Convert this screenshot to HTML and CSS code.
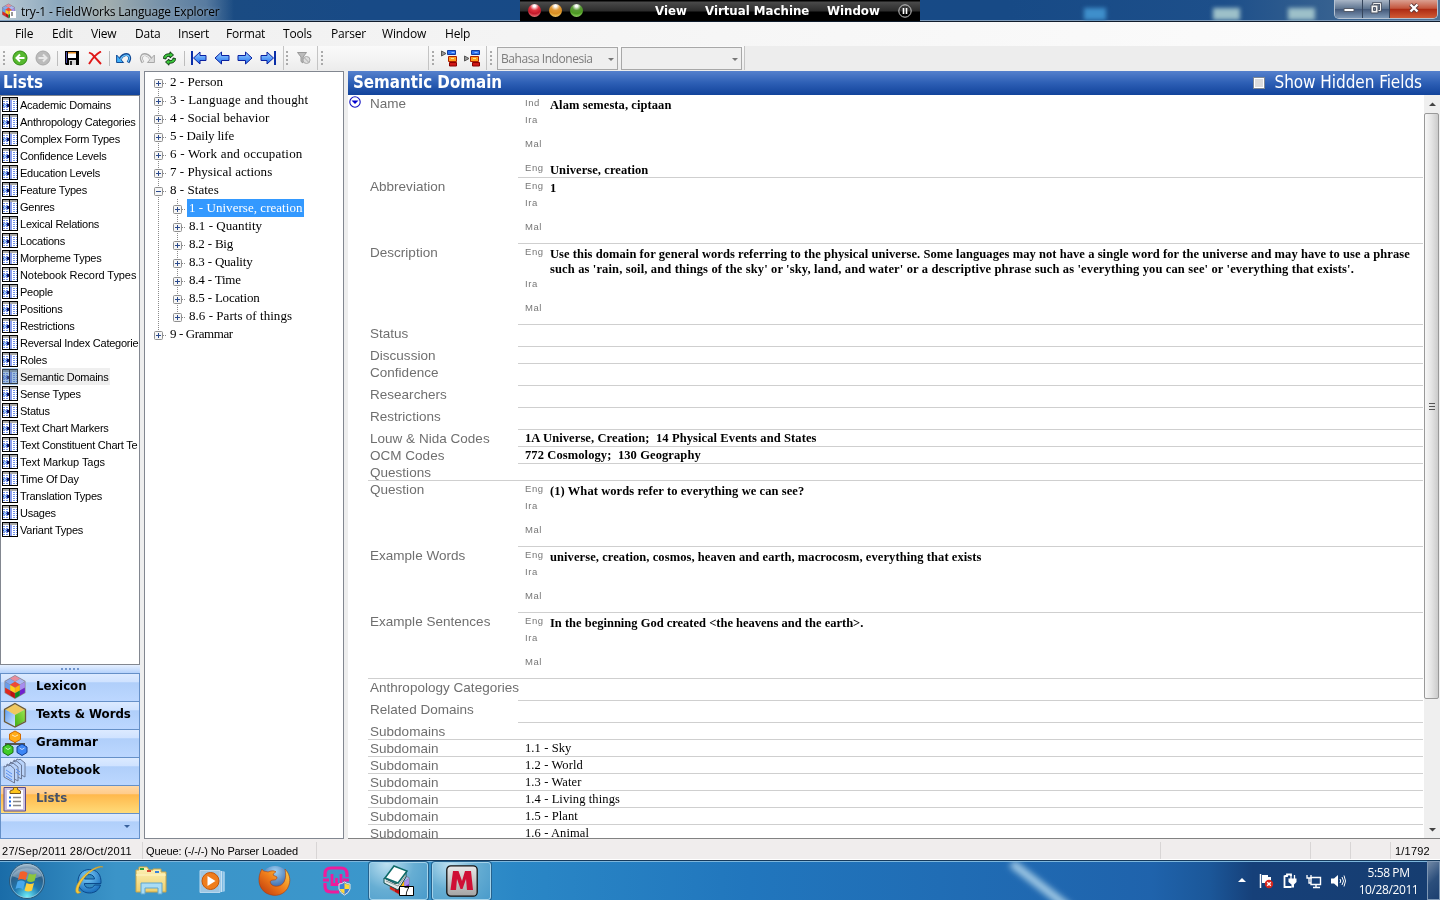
FILE: index.html
```html
<!DOCTYPE html>
<html lang="en">
<head>
<meta charset="utf-8">
<title>try-1 - FieldWorks Language Explorer</title>
<link rel="stylesheet" href="styles.css">
</head>
<body>
<svg class="defs" width="0" height="0">
  <defs>
    <linearGradient id="blueArrow" x1="0" y1="0" x2="0" y2="1"><stop offset="0" stop-color="#9fd4ff"/><stop offset="1" stop-color="#1b6cf0"/></linearGradient>
    <radialGradient id="orb" cx=".5" cy=".95" r=".95"><stop offset="0" stop-color="#6ff0fa"/><stop offset=".4" stop-color="#1f78b0"/><stop offset=".7" stop-color="#2c5f88"/><stop offset="1" stop-color="#b4c6d4"/></radialGradient>
    <radialGradient id="ieBlue" cx=".4" cy=".3" r=".8"><stop offset="0" stop-color="#7fd0fa"/><stop offset="1" stop-color="#0c62b5"/></radialGradient>
    <radialGradient id="foxGlobe" cx=".5" cy=".2" r=".8"><stop offset="0" stop-color="#9fd3f5"/><stop offset="1" stop-color="#133c8c"/></radialGradient>
    <linearGradient id="foxFur" x1="0" y1="1" x2="1" y2="0"><stop offset="0" stop-color="#b8320c"/><stop offset=".5" stop-color="#ef7b1a"/><stop offset="1" stop-color="#ffd84a"/></linearGradient>
    <linearGradient id="folder" x1="0" y1="0" x2="0" y2="1"><stop offset="0" stop-color="#fdf3b8"/><stop offset="1" stop-color="#edcf6d"/></linearGradient>
    <linearGradient id="silver" x1="0" y1="0" x2="0" y2="1"><stop offset="0" stop-color="#e8e8e8"/><stop offset="1" stop-color="#a4a4a4"/></linearGradient>
    <linearGradient id="txtLeft" x1="0" y1="0" x2="1" y2="1"><stop offset="0" stop-color="#5f9df0"/><stop offset="1" stop-color="#d4e8ff"/></linearGradient>
    <linearGradient id="txtRight" x1="0" y1="1" x2="1" y2="0"><stop offset="0" stop-color="#3fae14"/><stop offset="1" stop-color="#9be650"/></linearGradient>
  </defs>
  <symbol id="list" viewBox="0 0 16 15">
    <rect width="16" height="15" fill="#000"/><rect x="1" y="1" width="6" height="13" fill="#fff"/><rect x="8" y="1" width="7" height="13" fill="#fff"/>
    <path d="M1 1h6v2H1zM8 1h7v2H8z" fill="#a8a8a8"/><rect x="8" y="3" width="2" height="11" fill="#8ea0ee"/>
    <path d="M1 4.500h6M1 6.500h6M1 10.500h6M1 12.500h6M11 4.500h4M11 6.500h4M11 8.500h4M11 10.500h4M11 12.500h4" stroke="#6f8fe6" stroke-dasharray="2 1"/>
    <path d="M1 8.500h6" stroke="#1f4fd0" stroke-width="2"/><rect x="2" y="8" width="2" height="1" fill="#9fe0ff"/><rect x="5" y="7" width="2" height="3" fill="#101c70"/>
  </symbol>
  <symbol id="box" viewBox="0 0 9 9"><rect x=".5" y=".5" width="8" height="8" rx="1" fill="#f6f6f6" stroke="#8f8f8f"/><path d="M2 4.500h5" stroke="#2b4a8c"/></symbol>
  <symbol id="plus" viewBox="0 0 16 18"><path d="M8.500 0v18M13 10.500h3" stroke="#8a8a8a" stroke-dasharray="1 1"/><use href="#box" x="4" y="6" width="9" height="9"/><path d="M8.500 8v5" stroke="#2b4a8c"/></symbol>
  <symbol id="minus" viewBox="0 0 16 18"><path d="M8.500 0v18M13 10.500h3" stroke="#8a8a8a" stroke-dasharray="1 1"/><use href="#box" x="4" y="6" width="9" height="9"/></symbol>
  <symbol id="plusLast" viewBox="0 0 16 18"><path d="M8.500 0v7M13 10.500h3" stroke="#8a8a8a" stroke-dasharray="1 1"/><use href="#box" x="4" y="6" width="9" height="9"/><path d="M8.500 8v5" stroke="#2b4a8c"/></symbol>
  <symbol id="plusFirst" viewBox="0 0 16 18"><path d="M8.500 14v4M13 10.500h3" stroke="#8a8a8a" stroke-dasharray="1 1"/><use href="#box" x="4" y="6" width="9" height="9"/><path d="M8.500 8v5" stroke="#2b4a8c"/></symbol>
  <symbol id="guide" viewBox="0 0 19 18"><path d="M8.500 0v18" stroke="#8a8a8a" stroke-dasharray="1 1"/></symbol>
  <symbol id="cube" viewBox="0 0 24 26">
    <path d="M12 1 22.500 7v12L12 25 1.500 19V7z" fill="#8a8490"/>
    <path d="M12 1.800 17 4.600 12 7.500 7 4.600z" fill="#e88d9c"/><path d="M7 4.800l5 2.900L7 10.600 2.200 7.600z" fill="#86a9ee"/><path d="M17 4.800l4.800 2.800L17 10.600l-4.900-2.900z" fill="#a9b7f2"/><path d="M12 7.800l4.900 2.900L12 13.500l-4.900-2.800z" fill="#f04a35"/>
    <path d="M2.200 8l4.900 2.900v5.500L2.200 13.600z" fill="#6a9dea"/><path d="M7.200 11l4.700 2.700v5.400l-4.700-2.700z" fill="#ffd21d"/><path d="M2.200 13.800l4.900 2.700v4.900l-4.900-2.800z" fill="#e0281d"/><path d="M7.200 16.600l4.700 2.700v5l-4.700-2.700z" fill="#c01010"/>
    <path d="M12.100 13.700l4.700-2.800v5.500l-4.700 2.700z" fill="#ffb60a"/><path d="M17 10.800l4.800-2.800v5.600L17 16.300z" fill="#a78cf0"/><path d="M17 16.500l4.800-2.700v4.800L17 21.400z" fill="#6f1fd0"/><path d="M12.100 19.300l4.700-2.700v4.900l-4.700 2.800z" fill="#118a22"/>
  </symbol>
</svg>

<header class="titlebar">
  <div class="app-title">
    <svg width="16" height="16" viewBox="0 0 16 16"><use href="#cube" x="0" y="0" width="15" height="16"/><path d="M9 8h6v7H9z" fill="#fff"/><path d="M11 9v4" stroke="#333"/></svg>
    <span>try-1 - FieldWorks Language Explorer</span>
  </div>
  <i class="glow glow-a"></i><i class="glow glow-b"></i><i class="glow glow-c"></i>
  <div class="win-buttons">
    <b class="wb"><svg width="12" height="10" viewBox="0 0 12 10"><path d="M1 5.500h10v3H1z" fill="#fff" stroke="#555c6a"/></svg></b>
    <b class="wb wb-mid"><svg width="12" height="12" viewBox="0 0 12 12"><path d="M3.500 1.500h7v7h-7z" fill="none" stroke="#4d5463" stroke-width="2.600"/><path d="M3.500 1.500h7v7h-7z" fill="none" stroke="#eee"/><path d="M1 3h7v8H1z" fill="#f2f2f2" stroke="#4d5463"/><path d="M3.500 5.500h2v3h-2z" fill="#7a8598" stroke="#4d5463"/></svg></b>
    <b class="wb wb-close"><svg width="12" height="10" viewBox="0 0 12 10"><path d="M2.500 1.500l7 7M9.500 1.500l-7 7" stroke="#5a3838" stroke-width="4"/><path d="M2.500 1.500l7 7M9.500 1.500l-7 7" stroke="#fff" stroke-width="2.400"/></svg></b>
  </div>
  <div class="vm-bar">
    <i class="lamp red"></i><i class="lamp amber"></i><i class="lamp green"></i>
    <span class="vm-view">View</span><span class="vm-machine">Virtual Machine</span><span class="vm-window">Window</span>
    <svg width="14" height="14" viewBox="0 0 14 14"><circle cx="7" cy="7" r="6.200" fill="none" stroke="#ccc"/><path d="M5.500 4v6M8.500 4v6" stroke="#fff" stroke-width="1.600"/></svg>
  </div>
</header>

<nav class="menu"><span style="width:37px">File</span><span style="width:39px">Edit</span><span style="width:44px">View</span><span style="width:43px">Data</span><span style="width:48px">Insert</span><span style="width:57px">Format</span><span style="width:48px">Tools</span><span style="width:51px">Parser</span><span style="width:63px">Window</span><span>Help</span></nav>

<div class="toolbars">
  <div class="strip strip-main">
    <i class="grip"></i>
    <b class="tool"><svg width="16" height="16" viewBox="0 0 16 16"><circle cx="8" cy="8" r="7" fill="#56b82e" stroke="#2e8a12"/><path d="M12.500 8H5M8 4.500 4.500 8 8 11.500" fill="none" stroke="#fff" stroke-width="2"/></svg></b>
    <b class="tool"><svg width="16" height="16" viewBox="0 0 16 16"><circle cx="8" cy="8" r="7" fill="#bbb" stroke="#a8a8a8"/><path d="M3.500 8H11M8 4.500 11.500 8 8 11.500" fill="none" stroke="#e8e8e8" stroke-width="2"/></svg></b>
    <i class="sep"></i>
    <b class="tool"><svg width="14" height="14" viewBox="0 0 14 14"><path d="M0 0h14v14H1L0 13z" fill="#000"/><path d="M3 1h8v6H3z" fill="#fff"/><path d="M3 1h8v1.500H3z" fill="#e08a20"/><path d="M4 9h7v5H4z" fill="#d5d5d5"/><path d="M5 10h2v4H5z" fill="#222"/><path d="M1 1h1v11H1z" fill="#4848a0"/></svg></b>
    <b class="tool"><svg width="14" height="14" viewBox="0 0 14 14"><path d="M1 1.500 4 3l9 10M13 .5C8 3 4 8 1 13" fill="none" stroke="#e01818" stroke-width="1.900"/></svg></b>
    <i class="sep"></i>
    <b class="tool"><svg width="16" height="14" viewBox="0 0 16 14"><path d="M4 8.500C6 3 12 2 13.500 6c.7 2-.5 4-1.500 5.500" fill="none" stroke="#124a96" stroke-width="3"/><path d="M.6 4v7.500h7z" fill="#3fb0fa" stroke="#124a96"/><path d="M4.500 8.500C6 4 12 2.500 13.300 6c.6 1.800-.4 3.500-1.300 4.800" fill="none" stroke="#6cc8ff" stroke-width="1.200"/></svg></b>
    <b class="tool"><svg width="16" height="14" viewBox="0 0 16 14"><path d="M12 8.500C10 3 4 2 2.500 6c-.7 2 .5 4 1.500 5.500" fill="none" stroke="#a8a8a8" stroke-width="3"/><path d="M15.400 4v7.500h-7z" fill="#ddd" stroke="#a8a8a8"/><path d="M11.500 8.500C10 4 4 2.500 2.700 6c-.6 1.800.4 3.500 1.300 4.800" fill="none" stroke="#ececec" stroke-width="1.200"/></svg></b>
    <b class="tool"><svg width="15" height="15" viewBox="0 0 15 15"><path d="M1.500 7.500C1.500 4 4 2.700 8 2.700V.8L11.500 4 8 7V5.300C5 5.300 4 6 4 8z" fill="#3cc93c" stroke="#042e08" stroke-width=".9"/><path d="M13.500 7.500c0 3.500-2.500 4.800-6.500 4.800v1.900L3.500 11 7 8v1.700c3 0 4-.7 4-2.700z" fill="#3cc93c" stroke="#042e08" stroke-width=".9"/></svg></b>
    <i class="sep"></i>
    <b class="tool"><svg width="16" height="16" viewBox="0 0 16 16"><path d="M1 1v14" stroke="#0a2ea8" stroke-width="2"/><path d="M2.500 8 9 2v3.500h6v5H9V14z" fill="url(#blueArrow)" stroke="#0a20a0"/></svg></b>
    <b class="tool"><svg width="16" height="16" viewBox="0 0 16 16"><path d="M1 8 7.500 2v3.500H15v5H7.500V14z" fill="url(#blueArrow)" stroke="#0a20a0"/></svg></b>
    <b class="tool"><svg width="16" height="16" viewBox="0 0 16 16"><path d="M15 8 8.500 2v3.500H1v5h7.500V14z" fill="url(#blueArrow)" stroke="#0a20a0"/></svg></b>
    <b class="tool"><svg width="16" height="16" viewBox="0 0 16 16"><path d="M15 1v14" stroke="#0a2ea8" stroke-width="2"/><path d="M13.500 8 7 2v3.500H1v5h6V14z" fill="url(#blueArrow)" stroke="#0a20a0"/></svg></b>
  </div>
  <div class="strip strip-filter"><i class="grip"></i><b class="tool"><svg width="14" height="14" viewBox="0 0 14 14"><path d="M.5 1.500h9L6 6v6L4 10.500V6z" fill="#bbb" stroke="#999"/><circle cx="9.500" cy="9" r="3.500" fill="#ddd" stroke="#aaa"/><path d="M7 6.500l5 5" stroke="#aaa"/></svg></b></div>
  <div class="strip strip-blank"><i class="grip"></i></div>
  <div class="strip strip-insert"><i class="grip"></i>
    <b class="tool"><svg width="17" height="17" viewBox="0 0 17 17"><path d="M.5 1v5L5 3.500z" fill="#999" stroke="#555"/><path d="M6.500 .5h8v4h-8z" fill="#2d72f0" stroke="#123a9c"/><path d="M10.500 2.500h3" stroke="#8fc0ff"/><path d="M7.500 6.500h8v5h-8z" fill="#ffa020" stroke="#b02000"/><path d="M10 8.500h3" stroke="#ffe08a"/><path d="M8.500 12.500h7v3.500h-7z" fill="#d01818" stroke="#800"/></svg></b>
    <b class="tool"><svg width="17" height="17" viewBox="0 0 17 17"><path d="M.5 6v5L5 8.500z" fill="#999" stroke="#555"/><path d="M7.500 .5h8v4h-8z" fill="#2d72f0" stroke="#123a9c"/><path d="M10.500 2.500h3" stroke="#8fc0ff"/><path d="M6.500 6.500h8v5h-8z" fill="#ffa020" stroke="#b02000"/><path d="M9 8.500h3" stroke="#ffe08a"/><path d="M8.500 12.500h7v3.500h-7z" fill="#d01818" stroke="#800"/></svg></b>
  </div>
  <div class="strip strip-combos"><i class="grip"></i><div class="combo">Bahasa Indonesia</div><div class="combo"></div></div>
</div>

<main class="work">
  <aside class="side">
    <h1 class="head">Lists</h1>
    <ul class="lists">
      <li><svg><use href="#list"/></svg><span>Academic Domains</span></li>
      <li><svg><use href="#list"/></svg><span>Anthropology Categories</span></li>
      <li><svg><use href="#list"/></svg><span>Complex Form Types</span></li>
      <li><svg><use href="#list"/></svg><span>Confidence Levels</span></li>
      <li><svg><use href="#list"/></svg><span>Education Levels</span></li>
      <li><svg><use href="#list"/></svg><span>Feature Types</span></li>
      <li><svg><use href="#list"/></svg><span>Genres</span></li>
      <li><svg><use href="#list"/></svg><span>Lexical Relations</span></li>
      <li><svg><use href="#list"/></svg><span>Locations</span></li>
      <li><svg><use href="#list"/></svg><span>Morpheme Types</span></li>
      <li class="wide"><svg><use href="#list"/></svg><span>Notebook Record Types</span></li>
      <li><svg><use href="#list"/></svg><span>People</span></li>
      <li><svg><use href="#list"/></svg><span>Positions</span></li>
      <li><svg><use href="#list"/></svg><span>Restrictions</span></li>
      <li><svg><use href="#list"/></svg><span>Reversal Index Categorie</span></li>
      <li><svg><use href="#list"/></svg><span>Roles</span></li>
      <li class="current"><svg><use href="#list"/></svg><span>Semantic Domains</span></li>
      <li><svg><use href="#list"/></svg><span>Sense Types</span></li>
      <li><svg><use href="#list"/></svg><span>Status</span></li>
      <li><svg><use href="#list"/></svg><span>Text Chart Markers</span></li>
      <li><svg><use href="#list"/></svg><span>Text Constituent Chart Te</span></li>
      <li class="wide"><svg><use href="#list"/></svg><span>Text Markup Tags</span></li>
      <li><svg><use href="#list"/></svg><span>Time Of Day</span></li>
      <li><svg><use href="#list"/></svg><span>Translation Types</span></li>
      <li><svg><use href="#list"/></svg><span>Usages</span></li>
      <li><svg><use href="#list"/></svg><span>Variant Types</span></li>
    </ul>
    <div class="splitter"><i></i><i></i><i></i><i></i><i></i></div>
    <div class="areas">
      <div class="area"><svg width="24" height="26"><use href="#cube"/></svg><span>Lexicon</span></div>
      <div class="area"><svg width="24" height="26" viewBox="0 0 24 26"><path d="M12 2 2 7.500 12 13l10-5.500z" fill="#f0c860"/><path d="M2 7.500 12 13v12L2 19z" fill="url(#txtLeft)"/><path d="M22 7.500 12 13v12l10-6z" fill="url(#txtRight)"/><path d="M12 1.500 22.500 7.500v12L12 25 1.500 19.500v-12z" fill="none" stroke="#6b5a36" stroke-width="1.300"/></svg><span>Texts &amp; Words</span></div>
      <div class="area"><svg width="26" height="26" viewBox="0 0 26 26"><path d="M13 9v5M4 17v-3h18v3" fill="none" stroke="#555" stroke-width="2"/><path d="M13 1l5.500 3v5.500L13 12.500 7.500 9.500V4z" fill="#ffab17" stroke="#d06a00"/><path d="M6 14l5 3v5.500l-5 3-5-3V17z" fill="#42cd28" stroke="#187010"/><path d="M20 14l5 3v5.500l-5 3-5-3V17z" fill="#3d86f5" stroke="#103c90"/><path d="M10 5l3 1.500L16 5M3.500 18 6 19.500 8.500 18M17.500 18l2.500 1.500 2.500-1.500" fill="none" stroke="#fff" stroke-opacity=".7"/></svg><span>Grammar</span></div>
      <div class="area"><svg width="24" height="26" viewBox="0 0 24 26"><g fill="#b9d3fa" stroke="#6b7896"><path d="M11 2l2 1 1-2 2 1 1-1 5 4v14l-11-6z"/><path d="M7.500 4l2 1 1-2 2 1 1-1 5 4v14l-11-6z"/><path d="M4 6l2 1 1-2 2 1 1-1 5 4v14L4 17z"/><path d="M1 8l2 1 1-2 2 1 1-1 4.500 4v14L1 19z"/></g><path d="M3 12l6 4M3 15l6 4M3 18l6 4M13 11l4 3M13 14l4 3" stroke="#5a8ff0"/></svg><span>Notebook</span></div>
      <div class="area on"><svg width="24" height="26" viewBox="0 0 24 26"><path d="M1 1.500h21.500V25H1z" fill="#c9bfe0" stroke="#5a4a88"/><path d="M4 4h16v19H4z" fill="#fff"/><path d="M7 7.500h10.500V5l-3-1.500V1.500h-4v2L7 5z" fill="#ffc61d" stroke="#7a5a20"/><path d="M10 11.500h8M10 15.500h8M10 19.500h8" stroke="#888" stroke-width="1.500"/><path d="M6 11.500h2M6 15.500h2M6 19.500h2" stroke="#1f66e0" stroke-width="2"/></svg><span>Lists</span></div>
      <div class="area-foot"><svg width="6" height="4" viewBox="0 0 6 4"><path d="M0 0h6L3 3z" fill="#38619c"/></svg></div>
    </div>
  </aside>

  <section class="tree">
    <div class="node"><svg><use href="#plusFirst"/></svg><span>2 - Person</span></div>
    <div class="node loose"><svg><use href="#plus"/></svg><span>3 - Language and thought</span></div>
    <div class="node"><svg><use href="#plus"/></svg><span>4 - Social behavior</span></div>
    <div class="node tight"><svg><use href="#plus"/></svg><span>5 - Daily life</span></div>
    <div class="node loose"><svg><use href="#plus"/></svg><span>6 - Work and occupation</span></div>
    <div class="node"><svg><use href="#plus"/></svg><span>7 - Physical actions</span></div>
    <div class="node"><svg><use href="#minus"/></svg><span>8 - States</span></div>
    <div class="node"><svg class="rail"><use href="#guide"/></svg><svg><use href="#plus"/></svg><span class="picked">1 - Universe, creation</span></div>
    <div class="node"><svg class="rail"><use href="#guide"/></svg><svg><use href="#plus"/></svg><span>8.1 - Quantity</span></div>
    <div class="node tight"><svg class="rail"><use href="#guide"/></svg><svg><use href="#plus"/></svg><span>8.2 - Big</span></div>
    <div class="node tight"><svg class="rail"><use href="#guide"/></svg><svg><use href="#plus"/></svg><span>8.3 - Quality</span></div>
    <div class="node tight"><svg class="rail"><use href="#guide"/></svg><svg><use href="#plus"/></svg><span>8.4 - Time</span></div>
    <div class="node tight"><svg class="rail"><use href="#guide"/></svg><svg><use href="#plus"/></svg><span>8.5 - Location</span></div>
    <div class="node"><svg class="rail"><use href="#guide"/></svg><svg><use href="#plusLast"/></svg><span>8.6 - Parts of things</span></div>
    <div class="node tighter"><svg><use href="#plusLast"/></svg><span>9 - Grammar</span></div>
  </section>

  <section class="detail">
    <div class="head head-detail"><h2>Semantic Domain</h2><label><i class="check"></i>Show Hidden Fields</label></div>
    <div class="pane">
      <div class="fields">
        <div class="field"><svg class="chev" width="12" height="12" viewBox="0 0 12 12"><circle cx="6" cy="6" r="5.200" fill="#fff" stroke="#1010c0" stroke-width="1.100"/><path d="M2.500 4.500h7L6 8z" fill="#0000d0"/></svg><label>Name</label><div class="val"><p><i>Ind</i><b>Alam semesta, ciptaan</b></p><p class="gap"><i>Ira</i></p><p class="gap"><i>Mal</i></p><p><i>Eng</i><b>Universe, creation</b></p></div></div>
        <div class="field"><label>Abbreviation</label><div class="val"><p><i>Eng</i><b>1</b></p><p class="gap"><i>Ira</i></p><p class="gap"><i>Mal</i></p></div></div>
        <div class="field"><label>Description</label><div class="val"><p class="two"><i>Eng</i><b><span class="line-a">Use this domain for general words referring to the physical universe. Some languages may not have a single word for the universe and may have to use a phrase</span><br><span class="line-b">such as 'rain, soil, and things of the sky' or 'sky, land, and water' or a descriptive phrase such as 'everything you can see' or 'everything that exists'.</span></b></p><p class="gap"><i>Ira</i></p><p class="gap"><i>Mal</i></p></div></div>
        <div class="field tall"><label>Status</label><div class="val"></div></div>
        <div class="field"><label>Discussion</label><div class="val"></div></div>
        <div class="field tall"><label>Confidence</label><div class="val"></div></div>
        <div class="field tall"><label>Researchers</label><div class="val"></div></div>
        <div class="field tall"><label>Restrictions</label><div class="val"></div></div>
        <div class="field"><label>Louw &amp; Nida Codes</label><div class="val plain"><b>1A Universe, Creation;&nbsp; 14 Physical Events and States</b></div></div>
        <div class="field"><label>OCM Codes</label><div class="val plain"><b>772 Cosmology;&nbsp; 130 Geography</b></div></div>
        <div class="field full"><label>Questions</label><div class="val"></div></div>
        <div class="field"><label>Question</label><div class="val"><p><i>Eng</i><b>(1) What words refer to everything we can see?</b></p><p class="gap"><i>Ira</i></p><p class="gap"><i>Mal</i></p></div></div>
        <div class="field"><label>Example Words</label><div class="val"><p><i>Eng</i><b>universe, creation, cosmos, heaven and earth, macrocosm, everything that exists</b></p><p class="gap"><i>Ira</i></p><p class="gap"><i>Mal</i></p></div></div>
        <div class="field full"><label>Example Sentences</label><div class="val"><p><i>Eng</i><b class="even">In the beginning God created &lt;the heavens and the earth&gt;.</b></p><p class="gap"><i>Ira</i></p><p class="gap last"><i>Mal</i></p></div></div>
        <div class="field tall"><label>Anthropology Categories</label><div class="val"></div></div>
        <div class="field tall"><label>Related Domains</label><div class="val"></div></div>
        <div class="field full"><label>Subdomains</label><div class="val"></div></div>
        <div class="field full"><label>Subdomain</label><div class="val plain">1.1 - Sky</div></div>
        <div class="field full"><label>Subdomain</label><div class="val plain">1.2 - World</div></div>
        <div class="field full"><label>Subdomain</label><div class="val plain">1.3 - Water</div></div>
        <div class="field full"><label>Subdomain</label><div class="val plain">1.4 - Living things</div></div>
        <div class="field full"><label>Subdomain</label><div class="val plain">1.5 - Plant</div></div>
        <div class="field full"><label>Subdomain</label><div class="val plain">1.6 - Animal</div></div>
      </div>
      <div class="scroll">
        <svg width="16" height="18" viewBox="0 0 16 18"><path d="M5 11h7L8.500 7.500z" fill="#444"/></svg>
        <div class="thumb"><i></i><i></i><i></i></div>
        <svg width="16" height="17" viewBox="0 0 16 17"><path d="M5 7h7L8.500 10.500z" fill="#444"/></svg>
      </div>
    </div>
  </section>
</main>

<footer class="status"><span class="s1">27/Sep/2011 28/Oct/2011</span><span class="s2">Queue: (-/-/-) No Parser Loaded</span><span class="s3"></span><span class="s4"></span><span class="s5"></span><span class="s6"></span><span class="s7">1/1792</span></footer>

<div class="taskbar">
  <b class="task start"><svg width="38" height="38" viewBox="0 0 38 38"><circle cx="19" cy="19" r="17.500" fill="url(#orb)" stroke="#2c5878" stroke-width="1"/><circle cx="19" cy="19" r="16.500" fill="none" stroke="#a9cbe0" stroke-opacity=".6"/><path d="M4 14a16 12 0 0 1 30 0q-15 7-30 0" fill="#fff" opacity=".3"/><path d="M12 10q4-2 7.500 1l-2 7.500q-3.500-2.500-7.500-.500z" fill="#f2602a"/><path d="M21 11.500q4 2 7.500 0l-2 7.500q-4 2-7.500 0z" fill="#8cc63e"/><path d="M9.500 19.500q4-2 7.500.500l-2 7.500q-3.500-2.500-7.500-.500z" fill="#49a8ec"/><path d="M18.500 21q4 2 7.500 0l-2 7.500q-4 2-7.500 0z" fill="#ffd03c"/></svg></b>
  <b class="task"><svg width="34" height="34" viewBox="0 0 34 34"><path d="M17.500 5.500C10 5.500 6 11 6 17.500 6 24 10.500 29 17.500 29c5.500 0 9.500-3 11-8h-6c-1 2-2.500 3-5 3-3 0-5-1.500-5.200-4.500H29C29.500 10.500 25 5.500 17.500 5.500zM12.500 15c.5-2.500 2.200-4.500 5-4.500s4.800 2 5 4.500z" fill="url(#ieBlue)" stroke="#0b4a8c"/><path d="M31 3C25 0 8 11 4 24c-1 5 1 7 5 4-3 0-3-2-2-5C11 12 24 2 31 3z" fill="#f6c93b" stroke="#c4952a" stroke-width=".6"/></svg></b>
  <b class="task"><svg width="34" height="32" viewBox="0 0 34 32"><path d="M2 5h3V2h8l2 3h4V4h8v3h5v20H2z" fill="url(#folder)" stroke="#c9a548"/><path d="M6 3h4v2H6z" fill="#2aa043"/><path d="M13 5h4v2h-4z" fill="#d8472e"/><path d="M21 6h4v2h-4z" fill="#3a82d8"/><path d="M2 10h30" stroke="#fff6c8"/><path d="M7 29V18h21v11h-4v-6H11v6z" fill="#a9dcf5" stroke="#5fa6cf"/></svg></b>
  <b class="task"><svg width="30" height="30" viewBox="0 0 30 30"><path d="M22 5h4.500v21H22z" fill="#7db9e2"/><path d="M23.500 5v21M26 6v19" stroke="#c5e2f4"/><path d="M2 4.500h20v22H2z" fill="#9fc7e3" stroke="#b8d8ee"/><circle cx="12.500" cy="15" r="8.500" fill="#ef7d1c" stroke="#c65608"/><path d="M9.500 10v10l8-5z" fill="#fff"/></svg></b>
  <b class="task"><svg width="34" height="34" viewBox="0 0 34 34"><circle cx="17" cy="16" r="14" fill="url(#foxGlobe)"/><path d="M4 5c-5 8-4 19 4 24 9 5 20 2 23-8 2-6 0-12-4-16 1 5 1 9-1 13-3 5-9 5-12 3-3-3-2-5 2-5 2 0 3-1 3-3l-4-2c1-2 2-3 3-3-2-2-6-1-8 0-2-1-5 0-6-3z" fill="url(#foxFur)" stroke="#a93a0c" stroke-width=".6"/></svg></b>
  <b class="task"><svg width="30" height="32" viewBox="0 0 30 32"><path d="M3 12V9q0-6 6-6h10q6 0 6 6v3M3 18v3q0 6 6 6h8" fill="none" stroke="#ee1c9c" stroke-width="3.200"/><path d="M1 15h6M21 15h6" stroke="#ee1c9c" stroke-width="3"/><path d="M10 9v10.500h4.500V13m0 6.500H19V9" fill="none" stroke="#ee1c9c" stroke-width="2.800"/><path d="M17 19q3 0 5.500-2 2.500 2 5.500 2v5q-1 4-5.500 6-4.500-2-5.500-6z" fill="#3c7fd8" stroke="#e8e8e8"/><path d="M22.500 18q2 1.500 5 1.500V24h-5zM22.500 24v5q-4-2-5-5z" fill="#ffd83a"/></svg></b>
  <b class="task lit"><svg width="34" height="34" viewBox="0 0 34 34"><use href="#cube" x="4" y="7" width="27" height="25"/><path d="M2 14l12 6 8-13 2 1v5l-8 13-14-7z" fill="#e4eaea" stroke="#0d4f50"/><path d="M12 2 25 7l-9 12L3 14z" fill="#fff" stroke="#0d6a68" stroke-width="1.500"/><path d="M4 17l12 5 8-11" fill="none" stroke="#8a9a9a"/><path d="M17.500 22.500h14v9h-14z" fill="#fff" stroke="#000"/></svg><em>7</em></b>
  <b class="task lit lit-2"><svg width="32" height="32" viewBox="0 0 32 32"><rect x=".8" y=".8" width="30.400" height="30.400" rx="4" fill="url(#silver)" stroke="#111" stroke-width="1.300"/><path d="M7 6h5.500l3.500 10 3-10H25l2 19h-6l-1-11-3.500 10h-2L11 14l-1 11H4.500z" fill="#cf0f35"/></svg></b>
  <i class="streak"></i>
  <div class="tray">
    <svg width="8" height="5" viewBox="0 0 8 5"><path d="M4 0 8 4H0z" fill="#fff"/></svg>
    <svg width="16" height="16" viewBox="0 0 16 16"><path d="M2.500 1v14" stroke="#fff" stroke-width="1.500"/><path d="M4 2h6v2h3v6H4z" fill="#fff"/><circle cx="11" cy="11" r="4.200" fill="#d8251c"/><path d="M9.200 9.200l3.600 3.600M12.800 9.200l-3.600 3.600" stroke="#fff" stroke-width="1.400"/></svg>
    <svg width="16" height="16" viewBox="0 0 16 16"><path d="M2.500 3H5V1.500h4V3M2.500 2.500v11.500h7" fill="none" stroke="#fff" stroke-width="1.800"/><path d="M9 2v4M12.500 2v4" stroke="#fff" stroke-width="1.300"/><path d="M6.500 5.500h8V9l-2.500 2.500v3H9.500v-3L6.500 9z" fill="#fff"/></svg>
    <svg width="16" height="16" viewBox="0 0 16 16"><path d="M5 4.500h9.500v7H5zM7 14.500h7M10 12v2" fill="none" stroke="#fff" stroke-width="1.400"/><path d="M1 2v3h4V2M3 5v5h2" fill="none" stroke="#fff" stroke-width="1.300"/></svg>
    <svg width="16" height="16" viewBox="0 0 16 16"><path d="M1 5.500h3L8 2v12L4 10.500H1z" fill="#fff"/><path d="M10 6q1.500 2 0 4M12 4q3 4 0 8M14 2.500q3 5.500 0 11" fill="none" stroke="#fff"/></svg>
  </div>
  <div class="clock"><span>5:58 PM</span><span>10/28/2011</span></div>
  <i class="peek"></i>
</div>
</body>
</html>
```
FILE: styles.css
```css
* { box-sizing: border-box; }
html, body { margin: 0; height: 100%; }
body { width: 1440px; height: 900px; overflow: hidden; display: flex; flex-direction: column; background: #eee; color: #000; font: 11px/17px "Liberation Sans", sans-serif; }
h1, h2, p, ul { margin: 0; padding: 0; }
i, em, b.tool, b.task { font-style: normal; }
svg { display: block; flex: none; }
.defs { position: absolute; }

.titlebar { position: relative; flex: none; height: 22px; display: flex; justify-content: space-between; overflow: hidden; background: linear-gradient(90deg, #1e4d7c 0, #184a86 25%, #174a86 70%, #1d4f8a 85%, #4f7396 100%); border-bottom: 1px solid #101c2c; box-shadow: inset 0 -1px #7f9cbb; }
.app-title { display: flex; align-items: center; gap: 4px; height: 20px; padding: 2px 14px 0 1px; font: 12px/19px "Open Sans", sans-serif; letter-spacing: -.18px; text-shadow: 0 0 4px rgba(255, 255, 255, .35); background: linear-gradient(90deg, #b9c9d2 0, #8ba7bd 25%, #a3afaf 45%, #7490a9 70%, #587ba0 88%, transparent 100%); }
.glow { position: absolute; filter: blur(2px); top: 8px; width: 27px; height: 12px; background: #9dc0c9; }
.glow-a { left: 1084px; background: #3f8fcb; width: 22px; }
.glow-b { left: 1213px; }
.glow-c { left: 1288px; }
.win-buttons { display: flex; height: 19px; margin-right: 2px; border: 1px solid #b6c3d2; border-top: 0; border-radius: 0 0 5px 5px; overflow: hidden; }
.wb { width: 28px; display: flex; justify-content: center; align-items: center; background: linear-gradient(#a9b6c7, #5e7490 48%, #44597a 52%, #7f98b5); border-right: 1px solid #35455c; padding-bottom: 2px; }
.wb-mid { width: 27px; }
.wb-close { width: 47px; border: 0; background: linear-gradient(#dba091, #c4563d 46%, #ae2c14 52%, #d05a34); }
.vm-bar { position: absolute; left: 520px; top: 0; width: 400px; height: 22px; display: flex; align-items: center; padding: 0 8px; background: linear-gradient(#000 0 1px, #4a4a4a 2px, #2c2c2c 11px, #000 12px); color: #fff; font: bold 13.100px/22px "DejaVu Sans Condensed", "Noto Sans", sans-serif; }
.lamp { width: 13px; height: 13px; border-radius: 50%; margin: 0 8px 1px 0; background: radial-gradient(circle at 50% 15%, #fff 0 8%, #e13540 35%, #c2182a 60%, #ffb0a8); }
.amber { background: radial-gradient(circle at 50% 15%, #fff 0 8%, #e29a36 35%, #d98e22 60%, #ffe98a); }
.green { background: radial-gradient(circle at 50% 15%, #fff 0 8%, #5a9a36 35%, #4c9a22 60%, #b9f08a); }
.vm-view { width: 50px; margin-left: 64px; }
.vm-machine { width: 122px; white-space: nowrap; }
.vm-window { width: 71px; }

.menu { flex: none; height: 24px; display: flex; padding-left: 15px; background: linear-gradient(90deg, #efefef, #f6f6f6 50%, #fcfcfc); font: 12px/24px "Open Sans", sans-serif; letter-spacing: -.2px; }

.toolbars { flex: none; height: 25px; display: flex; background: #ededed; }
.strip { display: flex; align-items: center; height: 24px; border-right: 1px solid #c4c4c4; background: linear-gradient(#fafafa, #f4f4f4 50%, #ececec); }
.strip-main { width: 284px; padding-left: 3px; }
.strip-filter { width: 34px; padding-left: 2px; }
.strip-blank { width: 111px; padding-left: 3px; }
.strip-insert { width: 58px; padding-left: 3px; }
.strip-combos { width: 258px; padding-left: 3px; gap: 3px; }
.grip { flex: none; width: 2px; height: 14px; margin-right: 4px; background: repeating-linear-gradient(#aaa 0 2px, transparent 2px 4px); }
.strip-main .grip { margin-right: 3px; }
.strip-combos .grip { margin-right: 2px; }
.tool { width: 23px; flex: none; display: flex; justify-content: center; }
.sep { width: 1px; height: 15px; margin: 0 2.500px; background: #bdbdbd; }
.combo { position: relative; flex: none; width: 121px; height: 23px; border: 1px solid #a8a8a8; background: #efefef; color: #7b7b7b; padding-left: 3px; font: 12px/21px "Open Sans", sans-serif; letter-spacing: -.45px; }
.combo:first-of-type { letter-spacing: -.45px; }
.combo { letter-spacing: -.25px; }
.combo::after { content: ""; position: absolute; right: 3px; top: 10px; border: 3px solid transparent; border-top-color: #777; border-bottom: 0; }

.work { flex: none; height: 768px; display: flex; }
.head { height: 24px; padding-left: 3px; color: #fff; background: linear-gradient(#5681cd, #2d5fb5 50%, #12439b); font: bold 16.800px/23px "DejaVu Sans Condensed", "Noto Sans", sans-serif; }
.side { width: 140px; display: flex; flex-direction: column; }
.lists { height: 570px; list-style: none; border: 1px solid #828790; padding-right: 1px; overflow: hidden; background: #fff; white-space: nowrap; }
.lists li { height: 17px; display: flex; align-items: center; padding-left: 1px; letter-spacing: -.24px; }
.lists .wide { letter-spacing: -.07px; }
.lists svg { width: 16px; height: 15px; }
.lists span { padding: 0 2px; height: 17px; line-height: 18px; }
.current { background: linear-gradient(#a9c9ea, #a9c9ea) 1px 0 / 16px 17px no-repeat; }
.current span { background: #efefef; }
.current svg { opacity: .99; mix-blend-mode: multiply; background: none; }
.lists .current svg { filter: brightness(.92) drop-shadow(0 0 0 #3399ff); opacity: .72; }
.splitter { height: 8px; display: flex; justify-content: center; gap: 2px; padding-top: 3px; background: linear-gradient(#e6f0ff, #b5d2fb); }
.splitter i { width: 2px; height: 2px; background: #6f94cc; }
.areas { border: 1px solid #6590c8; height: 166px; }
.area, .area-foot { height: 28px; display: flex; align-items: center; border-bottom: 1px solid #6590c8; background: linear-gradient(#dceaff 0, #cfe2ff 30%, #b0cffa 32%, #bcd7ff 100%); font: bold 13.100px/24px "DejaVu Sans Condensed", "Noto Sans", sans-serif; white-space: nowrap; }
.area svg { margin: 0 0 1px 1px; width: 26px; }
.area span { margin: 0 0 3px 8px; }
.area.on { color: #44506a; background: linear-gradient(#ffd8a6, #ffcb8a 30%, #ffb84c 32%, #ffdb78); }
.area-foot { height: 24px; border: 0; justify-content: flex-end; padding: 2px 9px 0 0; }

.tree { width: 200px; margin-left: 4px; border: 1px solid #828790; background: #fff; padding: 1px 0 0 5px; font: 13px/18px "Liberation Serif", serif; letter-spacing: .04px; white-space: nowrap; }
.node { height: 18px; display: flex; }
.loose { letter-spacing: .2px; }
.tight { letter-spacing: -.2px; }
.tighter { letter-spacing: -.4px; }
.node svg { width: 16px; height: 18px; }
.node svg.rail { width: 19px; }
.node span { padding: 0 2px 0 4px; }
.node .picked { background: #3399ff; color: #fff; margin-left: 2px; padding: 0 1px 0 2px; }

.detail { width: 1092px; margin-left: 4px; display: flex; flex-direction: column; }
.head-detail { display: flex; justify-content: space-between; padding: 0 18px 0 5px; }
.head-detail h2 { font: inherit; }
.head-detail label { display: flex; align-items: center; height: 22px; font: 17px/22px "DejaVu Sans Condensed", "Noto Sans", sans-serif; letter-spacing: -.05px; }
.check { width: 12px; height: 12px; margin: 2px 9px 0 0; border: 1px solid #7d8896; background: #dcdcdc; box-shadow: inset 0 0 0 1px #fff; }
.pane { height: 744px; display: flex; background: #fff; border-bottom: 1px solid #828282; }
.fields { width: 1076px; height: 743px; overflow: hidden; padding: 0 1px 0 20px; }
.field { position: relative; display: flex; }
.chev { position: absolute; left: -19px; top: 1px; }
.field > label { flex: none; width: 150px; padding-left: 2px; height: 17px; font-size: 13.500px; letter-spacing: .02px; color: #6f6f6f; white-space: nowrap; line-height: 18px; }
.val { flex: 1; min-height: 17px; border-bottom: 1px solid #cfcfcf; padding-left: 7px; font: 13px/15px "Liberation Serif", serif; letter-spacing: .08px; white-space: nowrap; }
.tall .val { min-height: 22px; }
.full { border-bottom: 1px solid #cfcfcf; }
.full .val { border: 0; min-height: 16px; }
.full > label { height: 16px; }
.val p { display: flex; height: 17px; }
.val p.gap { height: 24px; }
.val p.two { height: 32px; }
.val i { width: 25px; flex: none; font: 9.500px/15px "Liberation Sans", sans-serif; letter-spacing: .55px; color: #777; }
.val p b { padding-top: 3px; font-size: 12.500px; }
.line-a { letter-spacing: .065px; }
.line-b { letter-spacing: .137px; }
.even { letter-spacing: 0; }
.plain { line-height: 16px; font-size: 12.500px; letter-spacing: .1px; }

.scroll { width: 16px; background: #efefef; display: flex; flex-direction: column; }
.thumb { height: 586px; margin-right: 1px; border: 1px solid #999; border-radius: 2px; background: linear-gradient(90deg, #f7f7f7, #e4e4e4 50%, #cbcbcb); display: flex; flex-direction: column; align-items: center; justify-content: center; gap: 2px; }
.thumb i { width: 6px; height: 1px; background: #555; }
.scroll svg:last-child { margin-top: auto; }

.status { flex: none; height: 21px; display: flex; padding-top: 3px; background: #f0eded; border-bottom: 1px solid #fff; line-height: 18px; }
.status span { border-right: 1px solid #d8d5d5; height: 17px; white-space: nowrap; }
.status .s1 { width: 143px; padding-left: 2px; letter-spacing: .27px; }
.status .s2 { width: 174px; padding-left: 3px; letter-spacing: -.13px; }
.s3 { width: 844px; }
.s4 { width: 150px; }
.s5 { width: 40px; }
.s6 { width: 40px; }
.status .s7 { padding-left: 4px; border: 0; letter-spacing: .2px; }

.taskbar { position: relative; flex: none; height: 40px; display: flex; align-items: center; overflow: hidden; border-top: 1px solid #163a5c; box-shadow: inset 0 1px #7db6dc; background: linear-gradient(90deg, #1a6ca8 0, #3b94c8 8%, #3b97cc 28%, #2a87c6 36%, #2176bd 52%, #1f63ac 80%, #1b5799 84%, #164079 87%, #163d70 100%); }
.task { position: relative; flex: none; width: 62px; height: 40px; display: flex; align-items: center; justify-content: center; }
.start { width: 58px; padding-right: 4px; }
.lit { width: 59px; height: 38px; margin: 0 2px 0 1px; border: 1px solid #a5d3ea; border-radius: 3px; background: radial-gradient(circle at 30% 0, #bfe2f2, #67aed3 50%, #4a9bcb); box-shadow: 0 0 0 1px #25628e; }
.lit em { position: absolute; left: 34px; top: 24px; font: 10px/10px "Liberation Sans", sans-serif; }
.lit-2 { margin-left: 2px; }
.streak { position: absolute; left: 1037px; top: -12px; width: 8px; height: 74px; background: #a5cde6; transform: rotate(-52deg); filter: blur(3px); }
.tray { margin-left: auto; display: flex; align-items: center; gap: 8px; }
.tray svg:first-child { margin-right: 4px; }
.clock { width: 77px; display: flex; flex-direction: column; align-items: center; margin-left: 4px; color: #fff; font: 12px/17px "Open Sans", sans-serif; letter-spacing: -.4px; }
.peek { width: 13px; height: 39px; border: 1px solid #7f98b5; background: linear-gradient(135deg, #7188a5, #2c4f7c 50%, #1c3f70); }
```
